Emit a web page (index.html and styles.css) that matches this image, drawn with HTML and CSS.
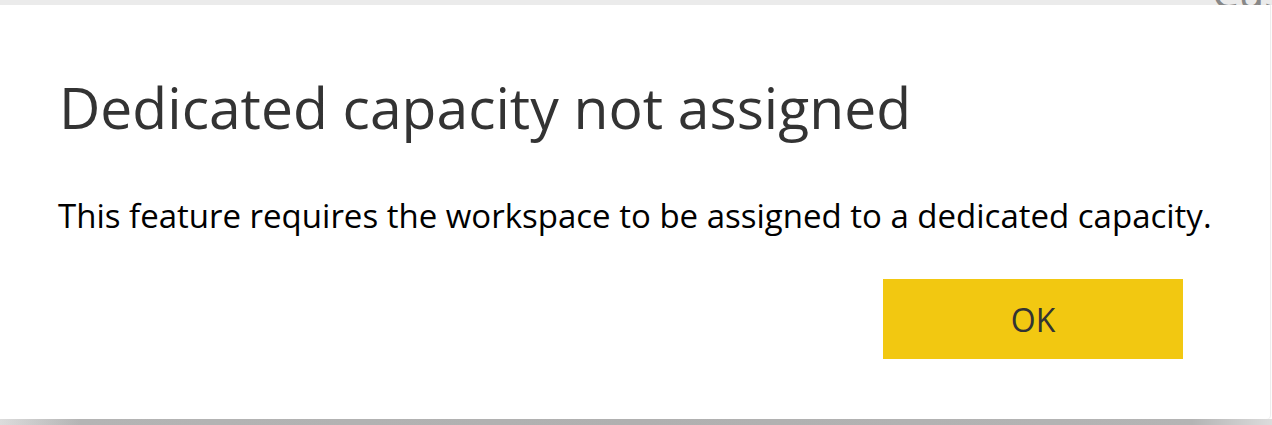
FILE: index.html
```html
<!DOCTYPE html>
<html lang="en">
<head>
    <meta charset="UTF-8">
    <title>Dedicated capacity not assigned</title>
    <link rel="stylesheet" href="styles.css">
</head>
<body>
    <div class="backdrop">
        <span class="behind-text">Cus</span>
    </div>

    <div class="dialog">
        <h1>Dedicated capacity not assigned</h1>
        <p>This feature requires the workspace to be assigned to a dedicated capacity.</p>
        <div class="actions">
            <button type="button">OK</button>
        </div>
    </div>

    <div class="shadow"></div>
</body>
</html>
```

FILE: styles.css
```css
body {
    margin: 0;
    background-color: #ffffff;
    font-family: "Open Sans", "Noto Sans", sans-serif;
    overflow: hidden;
}
.backdrop {
    position: relative;
    height: 5px;
    background-color: #ebebeb;
    overflow: hidden;
}
.behind-text {
    position: absolute;
    left: 1212px;
    top: -29px;
    font-size: 42px;
    line-height: 42px;
    color: #888888;
}
.dialog {
    box-sizing: border-box;
    height: 414px;
    margin-right: 2px;
    padding: 69px 58px 0 58px;
    background-color: #ffffff;
    border-radius: 0 0 4px 0;
    box-shadow: 1px 0 1px rgba(0, 0, 0, 0.08);
}
h1 {
    margin: 0 0 0 1px;
    font-size: 57px;
    line-height: 66px;
    font-weight: 400;
    color: #333333;
    white-space: nowrap;
}
p {
    margin: 54px 0 0 0;
    font-size: 33px;
    line-height: 44px;
    color: #000000;
    white-space: nowrap;
}
.actions {
    display: flex;
    justify-content: flex-end;
    margin-top: 41px;
    padding-right: 29px;
}
button {
    width: 300px;
    height: 80px;
    border: none;
    background-color: #f2c811;
    color: #333333;
    font-family: "Open Sans", "Noto Sans", sans-serif;
    font-size: 32px;
    padding: 0;
}
.shadow {
    height: 6px;
    background: linear-gradient(to right, #dcdcdc 0, #b4b4b4 80px, #b0b0b0 50%, #b4b4b4 calc(100% - 80px), #dcdcdc 100%);
}
```
